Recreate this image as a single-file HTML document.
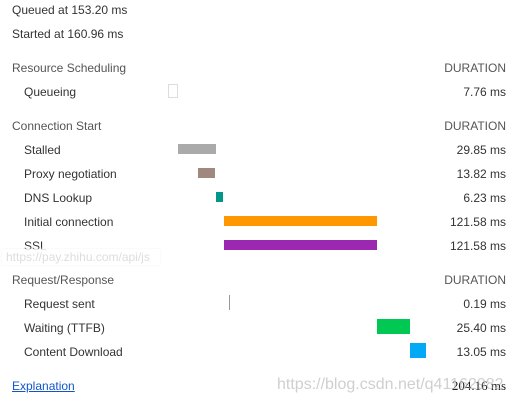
<!DOCTYPE html>
<html><head><meta charset="utf-8"><style>
body{margin:0;width:521px;height:406px;background:#fff;font-family:"Liberation Sans",sans-serif;font-size:12px;color:#333;position:relative;overflow:hidden}
.t{position:absolute;line-height:14px;white-space:nowrap}
.h{color:#555}
.r{position:absolute;right:15px;line-height:14px;white-space:nowrap}
.b{position:absolute}
</style></head><body>
<div class="t" style="left:12px;top:3px">Queued at 153.20 ms</div>
<div class="t" style="left:12px;top:27px">Started at 160.96 ms</div>

<div class="t h" style="left:12px;top:61px">Resource Scheduling</div><div class="r h" style="top:61px">DURATION</div>
<div class="t" style="left:24px;top:85px">Queueing</div><div class="r" style="top:85px">7.76 ms</div>
<div class="b" style="left:168px;top:84px;width:8px;height:12px;border:1px solid #ddd"></div>

<div class="t h" style="left:12px;top:119px">Connection Start</div><div class="r h" style="top:119px">DURATION</div>
<div class="t" style="left:24px;top:143px">Stalled</div><div class="r" style="top:143px">29.85 ms</div>
<div class="b" style="left:178px;top:144px;width:38px;height:10px;background:#aaa"></div>
<div class="t" style="left:24px;top:167px">Proxy negotiation</div><div class="r" style="top:167px">13.82 ms</div>
<div class="b" style="left:198px;top:168px;width:17px;height:10px;background:#a1887f"></div>
<div class="t" style="left:24px;top:191px">DNS Lookup</div><div class="r" style="top:191px">6.23 ms</div>
<div class="b" style="left:216px;top:192px;width:7px;height:10px;background:#009688"></div>
<div class="t" style="left:24px;top:215px">Initial connection</div><div class="r" style="top:215px">121.58 ms</div>
<div class="b" style="left:224px;top:216px;width:153px;height:10px;background:#ff9800"></div>
<div class="t" style="left:24px;top:239px">SSL</div><div class="r" style="top:239px">121.58 ms</div>
<div class="b" style="left:224px;top:240px;width:153px;height:10px;background:#9c27b0"></div>
<div class="t" style="left:2px;top:249px;width:154px;height:16px;line-height:16px;padding-left:4px;color:#ddd;background:rgba(255,255,255,.85);box-shadow:0 0 2px #f0f0f0">https://pay.zhihu.com/api/js</div>

<div class="t h" style="left:12px;top:273px">Request/Response</div><div class="r h" style="top:273px">DURATION</div>
<div class="t" style="left:24px;top:297px">Request sent</div><div class="r" style="top:297px">0.19 ms</div>
<div class="b" style="left:229px;top:295px;width:1px;height:15px;background:#999"></div>
<div class="t" style="left:24px;top:321px">Waiting (TTFB)</div><div class="r" style="top:321px">25.40 ms</div>
<div class="b" style="left:377px;top:319px;width:33px;height:15px;background:#00c853"></div>
<div class="t" style="left:24px;top:345px">Content Download</div><div class="r" style="top:345px">13.05 ms</div>
<div class="b" style="left:410px;top:343px;width:16px;height:15px;background:#03a9f4"></div>

<div class="t" style="left:12px;top:379px;color:#1155cc;text-decoration:underline">Explanation</div>
<div class="r" style="top:379px;color:#222;font-family:'Liberation Serif',serif;font-size:13px">204.16 ms</div>
<div class="t" style="left:277px;top:376px;font-size:16px;line-height:18px;color:rgba(175,175,175,.6)">https://blog.csdn.net/q41162982</div>
</body></html>
